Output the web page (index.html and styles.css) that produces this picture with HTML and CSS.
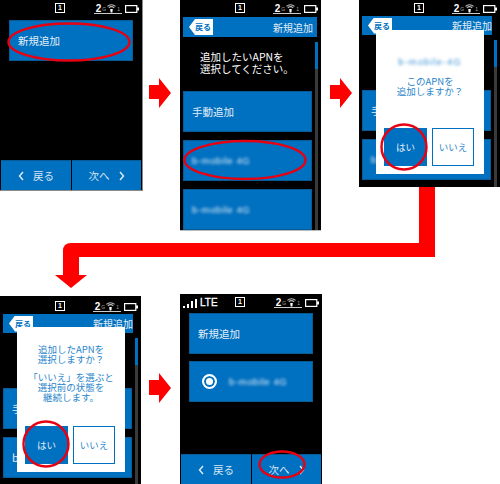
FILE: index.html
```html
<!DOCTYPE html>
<html lang="ja">
<head>
<meta charset="utf-8">
<title>新規追加</title>
<link rel="stylesheet" href="styles.css">
</head>
<body>
<svg class="defs" width="0" height="0">
  <symbol id="wifi" viewBox="0 0 10 10">
    <path d="M0.5 3.2C3 0.7 7 0.7 9.5 3.2M2 4.9C3.7 3.3 6.3 3.3 8 4.9" fill="none" stroke="#bbb" stroke-width="1.2"/>
    <path d="M3.6 6.2H6.4L6 10H4Z" fill="#fff"/>
  </symbol>
  <symbol id="battery" viewBox="0 0 14 8">
    <rect x="0.6" y="0.6" width="11.2" height="6.8" fill="none" stroke="#fff" stroke-width="1.2"/>
    <rect x="12" y="2.5" width="2" height="3" fill="#fff"/>
  </symbol>
  <symbol id="chev-l" viewBox="0 0 6 10">
    <path d="M5 1L1.5 5L5 9" fill="none" stroke="#e4eef6" stroke-width="1.4"/>
  </symbol>
  <symbol id="chev-r" viewBox="0 0 6 10">
    <path d="M1 1L4.5 5L1 9" fill="none" stroke="#e4eef6" stroke-width="1.4"/>
  </symbol>
</svg>

<main class="canvas">

  <section class="phone p1">
    <div class="status">
      <div></div>
      <div class="sim">1</div>
      <div class="right"><span class="net"><b>2</b><i>G</i><svg class="wifi"><use href="#wifi"/></svg><i>1</i></span><svg class="bat"><use href="#battery"/></svg></div>
    </div>
    <div class="list list-inset">
      <div class="btn">新規追加</div>
    </div>
    <div class="nav">
      <div class="nav-btn"><svg class="chev"><use href="#chev-l"/></svg><span>戻る</span></div>
      <div class="nav-btn"><span>次へ</span><svg class="chev"><use href="#chev-r"/></svg></div>
    </div>
  </section>

  <section class="phone p2">
    <div class="status">
      <div></div>
      <div class="sim">1</div>
      <div class="right"><span class="net"><b>2</b><i>G</i><svg class="wifi"><use href="#wifi"/></svg><i>1</i></span><svg class="bat"><use href="#battery"/></svg></div>
    </div>
    <header class="head"><span class="tag">戻る</span><span class="title">新規追加</span></header>
    <div class="body">
      <div class="col">
        <p class="lead">追加したいAPNを<br>選択してください。</p>
        <div class="btn">手動追加</div>
        <div class="btn"><span class="blur">b-mobile 4G</span></div>
        <div class="btn"><span class="blur">b-mobile 4G</span></div>
      </div>
      <div class="scroll"><div class="thumb"></div></div>
    </div>
  </section>

  <section class="phone p3">
    <div class="status">
      <div></div>
      <div class="sim">1</div>
      <div class="right"><span class="net"><b>2</b><i>G</i><svg class="wifi"><use href="#wifi"/></svg><i>1</i></span><svg class="bat"><use href="#battery"/></svg></div>
    </div>
    <header class="head"><span class="tag">戻る</span><span class="title">新規追加</span></header>
    <div class="body">
      <div class="col">
        <p class="lead"></p>
        <div class="btn">手動追加</div>
        <div class="btn"><span class="blur">b-mobile 4G</span></div>
      </div>
      <div class="scroll"><div class="thumb"></div></div>
    </div>
    <div class="dialog">
      <p class="msg msg-a"><span class="blur blur-blue">b-mobile-4G</span></p>
      <p class="msg">このAPNを<br>追加しますか？</p>
      <div class="choices"><div class="yes">はい</div><div class="no">いいえ</div></div>
    </div>
  </section>

  <section class="phone p4">
    <div class="status">
      <div></div>
      <div class="sim">1</div>
      <div class="right"><span class="net"><b>2</b><i>G</i><svg class="wifi"><use href="#wifi"/></svg><i>1</i></span><svg class="bat"><use href="#battery"/></svg></div>
    </div>
    <header class="head"><span class="tag">戻る</span><span class="title">新規追加</span></header>
    <div class="body">
      <div class="col">
        <p class="lead"></p>
        <div class="btn">手動追加</div>
        <div class="btn">b-mobile 4G</div>
      </div>
      <div class="scroll"><div class="thumb"></div></div>
    </div>
    <div class="dialog">
      <p class="msg">追加したAPNを<br>選択しますか？</p>
      <p class="msg">「いいえ」を選ぶと<br>選択前の状態を<br>継続します。</p>
      <div class="choices"><div class="yes">はい</div><div class="no">いいえ</div></div>
    </div>
  </section>

  <section class="phone p5">
    <div class="status">
      <div class="lte"><span class="bars"><i class="b1"></i><i class="b2"></i><i class="b3"></i><i class="b4"></i></span>LTE</div>
      <div class="sim">1</div>
      <div class="right"><span class="net"><b>2</b><i>G</i><svg class="wifi"><use href="#wifi"/></svg><i>1</i></span><svg class="bat"><use href="#battery"/></svg></div>
    </div>
    <div class="list list-inset">
      <div class="btn">新規追加</div>
      <div class="btn btn-radio"><span class="radio"></span><span class="blur">b-mobile 4G</span></div>
    </div>
    <div class="nav">
      <div class="nav-btn"><svg class="chev"><use href="#chev-l"/></svg><span>戻る</span></div>
      <div class="nav-btn"><span>次へ</span><svg class="chev"><use href="#chev-r"/></svg></div>
    </div>
  </section>

  <svg class="marks" width="500" height="484" viewBox="0 0 500 484">
    <g fill="#ff0000">
      <path d="M149 85H159V78L171 93L159 108V99H149Z"/>
      <path d="M330 85H340V78L352 93L340 108V99H330Z"/>
      <path d="M149 380H159V373L171 388L159 403V395H149Z"/>
      <path d="M419 187H435V257H79V275H87L71 288L55 275H63V251Q63 243 71 243H419Z"/>
    </g>
    <g fill="none" stroke="#e60012" stroke-width="2.4">
      <ellipse cx="69" cy="42" rx="60.5" ry="18.5"/>
      <ellipse cx="245" cy="160" rx="60.5" ry="19"/>
      <circle cx="404" cy="147" r="22.5"/>
      <circle cx="46" cy="444" r="22.5"/>
      <ellipse cx="282" cy="464.500" rx="22.500" ry="13"/>
    </g>
  </svg>
</main>
</body>
</html>
```
FILE: styles.css
```css
* { box-sizing: border-box; }
html, body { margin: 0; padding: 0; background: #fff; }
body { font-family: "Noto Sans CJK JP", "Noto Sans", sans-serif; color: #fff; }
p { margin: 0; }
.defs { position: absolute; }
.canvas { position: relative; width: 500px; height: 484px; overflow: hidden; }
.marks { position: absolute; left: 0; top: 0; pointer-events: none; }

.phone { position: absolute; background: #000; display: flex; flex-direction: column; overflow: hidden; }
.p1 { left: 0; top: 0; width: 143px; height: 191px; border-right: 1px solid #8a8a8a; border-bottom: 1px solid #8a8a8a; }
.p2 { left: 180px; top: 0; width: 141px; height: 231px; border-bottom: 1px solid #bbb; }
.p3 { left: 359px; top: 0; width: 141px; height: 187px; }
.p4 { left: 0; top: 296px; width: 141px; height: 188px; }
.p5 { left: 180px; top: 294px; width: 142px; height: 190px; }

.status { flex: none; height: 17px; display: grid; grid-template-columns: 55px 10px 1fr; align-items: start; padding-top: 3px; }
.p3 .status { height: 16px; }
.p4 .status { height: 18px; padding-top: 5px; }
.p5 .status { height: 19px; padding-top: 3px; }
.sim { width: 10px; height: 10px; border: 1.500px solid #fff; font-size: 7px; line-height: 7px; font-weight: 700; text-align: center; font-family: "Liberation Sans", sans-serif; }
.right { display: flex; align-items: flex-start; justify-content: flex-end; gap: 3px; padding-right: 3px; }
.net { display: flex; align-items: flex-end; height: 11px; padding: 0 1px; border-bottom: 1px solid #ccc; font-family: "Liberation Sans", sans-serif; line-height: 9px; }
.net b { font-size: 10px; margin-left: 1px; }
.net i { font-style: normal; font-size: 5px; line-height: 7px; color: #aaa; margin: 0 1px; }
.wifi { width: 9px; height: 10px; }
.bat { width: 14px; height: 8px; margin-top: 2px; }
.lte { display: flex; align-items: flex-end; gap: 3px; padding-left: 3px; font: 400 10px/10px "Liberation Sans", sans-serif; height: 11px; -webkit-text-stroke: 0.300px #fff; }
.bars { display: flex; align-items: flex-end; gap: 2px; height: 9px; }
.bars i { width: 2px; background: #fff; }
.b1 { height: 2px; }
.b2 { height: 4px; }
.b3 { height: 7px; }
.b4 { height: 9px; }

.list { flex: 1; min-height: 0; display: flex; flex-direction: column; gap: 7px; }
.list-inset { padding: 3px 9px 0; }
.p5 .list-inset { padding-top: 0; }

.btn { flex: none; height: 41px; display: flex; align-items: center; padding-left: 8px; background: #0070c0; color: #e4eef6; font-size: 10.500px; border: 1px solid #0a5a96; }
.btn-radio { padding-left: 12px; gap: 12px; }
.radio { width: 15px; height: 15px; border: 2px solid #fff; border-radius: 50%; background: #fff; box-shadow: inset 0 0 0 2px #0070c0; }
.blur { font-size: 9.500px; color: #e8f2fa; filter: blur(1.400px); font-family: "Liberation Sans", sans-serif; letter-spacing: 0.600px; }
.blur-blue { color: #3a92d4; letter-spacing: 1px; }

.nav { flex: none; height: 30px; display: grid; grid-template-columns: 70px 69px; gap: 1px; padding-left: 1px; }
.nav-btn { background: #0070c0; border-top: 1px solid #0a5a96; display: flex; align-items: center; justify-content: center; gap: 9px; font-size: 10.500px; color: #d6e6f3; }
.chev { width: 6px; height: 10px; }

.head { flex: none; height: 20px; margin: 0 4px 0 3px; background: #0070c0; display: flex; align-items: center; justify-content: space-between; padding: 0 4px 0 6px; }
.p3 .head, .p4 .head { height: 19px; margin-right: 8px; padding-right: 0; }
.tag { width: 24px; height: 16px; background: #fff; color: #0070c0; font-size: 8px; font-weight: 700; line-height: 16px; text-align: right; padding-right: 2px; clip-path: polygon(6px 0, 100% 0, 100% 100%, 6px 100%, 0 50%); }
.title { font-size: 10px; color: #e4eef6; }

.body { flex: 1; min-height: 0; display: flex; gap: 3px; padding: 5px 0 0 3px; overflow: hidden; }
.col { width: 129px; flex: none; display: flex; flex-direction: column; gap: 8px; }
.lead { flex: none; height: 41px; padding: 9px 0 0 17px; font-size: 10.500px; line-height: 12px; color: #fff; }
.p3 .lead, .p4 .lead { height: 42px; }
.scroll { flex: none; width: 3px; background: #3a3a3a; align-self: stretch; }
.thumb { height: 27px; background: #0070c0; }

.dialog { position: absolute; left: 17px; top: 30px; width: 108px; height: 144px; background: #fff; display: flex; flex-direction: column; align-items: center; color: #2a86cc; padding-top: 26px; }
.p4 .dialog { top: 31px; height: 145px; padding-top: 17px; }
.msg { font-size: 9.500px; line-height: 10px; text-align: center; margin-bottom: 8px; white-space: nowrap; }
.msg-a { margin-bottom: 9px; }
.choices { position: absolute; left: 8px; bottom: 8px; display: flex; gap: 5px; }
.yes, .no { width: 43px; height: 38px; display: flex; align-items: center; justify-content: center; font-size: 9.500px; }
.yes { background: #0070c0; color: #e4eef6; }
.no { width: 42px; background: #fff; color: #2a86cc; border: 1px solid #0070c0; }
```
